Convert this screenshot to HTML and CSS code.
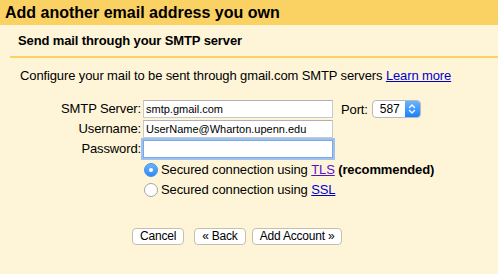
FILE: index.html
```html
<!DOCTYPE html>
<html lang="en">
  <head>
    <meta charset="UTF-8" />
    <title>Add another email address you own</title>
    <link rel="stylesheet" href="styles.css">
  </head>
  <body>
    <div class="dialog">
      <div class="dialog_title">Add another email address you own</div>
      <div class="dialog_sub">Send mail through your SMTP server</div>
      <div class="dialog_body">
        <p class="intro">Configure your mail to be sent through gmail.com SMTP servers <a href="#">Learn more</a></p>

        <div class="form">
          <label class="lbl">SMTP Server:</label>
          <div class="field">
            <input type="text" class="txt" value="smtp.gmail.com" />
            <span class="port-lbl">Port:</span>
            <div class="port">
              <span class="port-val">587</span>
              <span class="port-btn">
                <svg width="8" height="12" viewBox="0 0 8 12">
                  <path d="M1.5 4.5 L4 2 L6.5 4.5 M1.5 7.5 L4 10 L6.5 7.5" fill="none" stroke="#fff" stroke-width="1.4" stroke-linecap="round" stroke-linejoin="round"/>
                </svg>
              </span>
            </div>
          </div>

          <label class="lbl">Username:</label>
          <div class="field">
            <input type="text" class="txt" value="UserName@Wharton.upenn.edu" />
          </div>

          <label class="lbl">Password:</label>
          <div class="field">
            <input type="password" class="txt focus" />
          </div>

          <span></span>
          <div class="radio-row">
            <span class="radio checked"></span>
            Secured connection using&nbsp;<a href="#" class="visited">TLS</a>&nbsp;<b>(recommended)</b>
          </div>

          <span></span>
          <div class="radio-row">
            <span class="radio"></span>
            Secured connection using&nbsp;<a href="#">SSL</a>
          </div>
        </div>

        <div class="buttons">
          <button class="btn">Cancel</button>
          <button class="btn back">« Back</button>
          <button class="btn">Add Account »</button>
        </div>
      </div>
    </div>
  </body>
</html>
```

FILE: styles.css
```css
body {
  margin: 0;
  font-family: "Liberation Sans", Arial, sans-serif;
  font-size: 13px;
  letter-spacing: -0.12px;
  color: #000;
  background: #fef5d8;
}

.dialog {
  width: 498px;
  height: 274px;
  background: #fef5d8;
}

.dialog_title {
  height: 25px;
  line-height: 25px;
  padding-left: 5px;
  background: #fad163;
  font-size: 16px;
  font-weight: bold;
  letter-spacing: 0;
}

.dialog_sub {
  height: 31px;
  line-height: 32px;
  margin-left: 10px;
  text-indent: 8px;
  font-weight: bold;
  border-bottom: 2px solid #fad163;
}

.intro {
  margin: 0;
  padding: 10px 0 0 20px;
  line-height: 16px;
}

a {
  color: #0000cc;
}

a.visited {
  color: #5511cc;
}

.form {
  display: grid;
  grid-template-columns: 141px auto;
  column-gap: 2px;
  row-gap: 2px;
  margin-top: 16px;
  align-items: center;
}

.lbl {
  text-align: right;
  line-height: 18px;
}

.field {
  display: flex;
  align-items: center;
  height: 18px;
}

.txt {
  box-sizing: border-box;
  width: 190px;
  height: 18px;
  margin: 0;
  padding: 0 2px;
  border: 1px solid #c9c9c9;
  border-top-color: #b0b0b0;
  background: #fff;
  font-family: "Liberation Sans", Arial, sans-serif;
  font-size: 11px;
  outline: none;
}

.txt.focus {
  border: 1px solid #7aa7e6;
  box-shadow: 0 0 0 2px #9ec1f2;
}

.port-lbl {
  margin-left: 8px;
}

.port {
  display: flex;
  margin-left: 4px;
  width: 49px;
  height: 18px;
  box-sizing: border-box;
  border: 1px solid #b9b9b9;
  border-radius: 4px;
  background: #fff;
  overflow: hidden;
}

.port-val {
  flex: 1;
  padding-left: 7px;
  line-height: 16px;
  font-size: 12px;
}

.port-btn {
  width: 15px;
  display: flex;
  align-items: center;
  justify-content: center;
  background: linear-gradient(#6cb3fa, #1a82fb);
}

.radio-row {
  display: flex;
  align-items: center;
  height: 17px;
  margin-top: 1px;
  margin-left: 1px;
}

.radio {
  box-sizing: border-box;
  width: 14px;
  height: 14px;
  border-radius: 50%;
  border: 1px solid #a5a5a5;
  background: #fff;
  margin-right: 3px;
  position: relative;
}

.radio.checked {
  border-color: #3b8ef5;
  background: linear-gradient(#6cb3fa, #2f8af8);
}

.radio.checked::after {
  content: "";
  position: absolute;
  left: 4px;
  top: 4px;
  width: 4px;
  height: 4px;
  border-radius: 50%;
  background: #fff;
}

.buttons {
  display: flex;
  margin: 30px 0 0 132px;
}

.btn {
  box-sizing: border-box;
  height: 17px;
  margin: 0 6px 0 0;
  padding: 0 7px;
  border: 1px solid #c5bfae;
  border-radius: 4px;
  background: #fff;
  font-family: "Liberation Sans", Arial, sans-serif;
  font-size: 12px;
  letter-spacing: -0.2px;
  line-height: 15px;
  color: #000;
}

.btn.back {
  margin-left: 4px;
}
```
